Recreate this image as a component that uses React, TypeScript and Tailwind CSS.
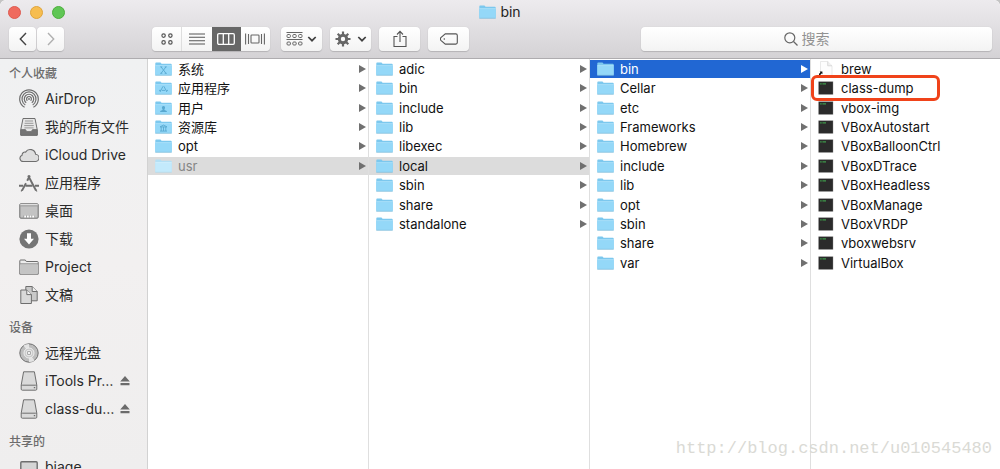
import { useState } from 'react';
import type { ReactNode } from 'react';
import clsx from 'clsx';

type Entry = {
  name: string;
  kind?: 'folder' | 'exec' | 'alias';
  glyph?: 'system' | 'apps' | 'users' | 'library';
  dimmed?: boolean;
  marked?: boolean;
};

type Column = {
  path: string;
  entries: Entry[];
  selected?: string;
  active?: boolean;
};

const folders = (...names: string[]): Entry[] => names.map((name) => ({ name, kind: 'folder' }));
const execs = (...names: string[]): Entry[] => names.map((name) => ({ name, kind: 'exec' }));

const columns: Column[] = [
  {
    path: '/',
    selected: 'usr',
    entries: [
      { name: '系统', glyph: 'system' },
      { name: '应用程序', glyph: 'apps' },
      { name: '用户', glyph: 'users' },
      { name: '资源库', glyph: 'library' },
      { name: 'opt' },
      { name: 'usr', dimmed: true },
    ],
  },
  {
    path: '/usr',
    selected: 'local',
    entries: folders('adic', 'bin', 'include', 'lib', 'libexec', 'local', 'sbin', 'share', 'standalone'),
  },
  {
    path: '/usr/local',
    selected: 'bin',
    active: true,
    entries: folders('bin', 'Cellar', 'etc', 'Frameworks', 'Homebrew', 'include', 'lib', 'opt', 'sbin', 'share', 'var'),
  },
  {
    path: '/usr/local/bin',
    entries: [
      { name: 'brew', kind: 'alias' },
      { name: 'class-dump', kind: 'exec', marked: true },
      ...execs(
        'vbox-img',
        'VBoxAutostart',
        'VBoxBalloonCtrl',
        'VBoxDTrace',
        'VBoxHeadless',
        'VBoxManage',
        'VBoxVRDP',
        'vboxwebsrv',
        'VirtualBox'
      ),
    ],
  },
];

const places = [
  {
    title: '个人收藏',
    items: [
      { label: 'AirDrop', icon: <AirDropIcon /> },
      { label: '我的所有文件', icon: <AllFilesIcon /> },
      { label: 'iCloud Drive', icon: <CloudIcon /> },
      { label: '应用程序', icon: <AppsIcon /> },
      { label: '桌面', icon: <DesktopIcon /> },
      { label: '下载', icon: <DownloadIcon /> },
      { label: 'Project', icon: <PlainFolderIcon /> },
      { label: '文稿', icon: <DocumentsIcon /> },
    ],
  },
  {
    title: '设备',
    items: [
      { label: '远程光盘', icon: <DiscIcon /> },
      { label: 'iTools Pr…', icon: <DriveIcon />, ejectable: true },
      { label: 'class-du…', icon: <DriveIcon />, ejectable: true },
    ],
  },
  {
    title: '共享的',
    items: [{ label: 'biage', icon: <MonitorIcon /> }],
  },
];

function SideSvg({ children }: { children: ReactNode }) {
  return (
    <svg viewBox="0 0 20 20" className="size-5 shrink-0" fill="none" stroke="#6e6e6e" strokeWidth="1" aria-hidden="true">
      {children}
    </svg>
  );
}

function AirDropIcon() {
  return (
    <SideSvg>
      <g strokeWidth="1.2">
        <path d="M5.6 18.3a9.3 9.3 0 1 1 8.8 0" />
        <path d="M6.3 15.9a7 7 0 1 1 7.4 0" />
        <path d="M7.2 13.7a4.7 4.7 0 1 1 5.6 0" />
        <path d="M8.4 11.7a2.4 2.4 0 1 1 3.2 0" />
      </g>
      <circle cx="10" cy="10" r="0.9" fill="#6e6e6e" stroke="none" />
    </SideSvg>
  );
}

function AllFilesIcon() {
  return (
    <SideSvg>
      <path d="M4 1.5h12l2.2 11v5.7H1.8v-5.7z" fill="#e6e6e6" />
      <path d="M1.8 12.7h4.7l1.2 2h4.6l1.2-2h4.7v5.5H1.8z" fill="#747474" />
      <path d="M6 4h8M5.6 6.3h8.8M5.2 8.6h9.6M5.4 10.9h9.2" stroke="#999" />
    </SideSvg>
  );
}

function CloudIcon() {
  return (
    <SideSvg>
      <path
        d="M4.3 16.5h11.8a3.6 3.6 0 0 0 .5-7.2 5.4 5.4 0 0 0-10-2.2 2.9 2.9 0 0 0-3.5 3.100 3.250 3.250 0 0 0 1.200 6.300z"
        fill="#dedede"
        strokeWidth="1.1"
      />
    </SideSvg>
  );
}

function AppsIcon() {
  return (
    <SideSvg>
      <g strokeWidth="1.9">
        <path d="M9.1 2.5 17 17.5" />
        <path d="M10.9 2.5 8.2 7.8M7 10.2 3 17.6" />
        <path d="M0 12.7h4.2M6.5 12.7h7M16 12.7h4" strokeWidth="2" />
      </g>
      <path d="M16.3 16.2 18 18.5M3.6 16.3 2 18.4" strokeWidth="1.1" />
    </SideSvg>
  );
}

function DesktopIcon() {
  return (
    <SideSvg>
      <rect x="0.8" y="2.8" width="18.4" height="14.4" rx="1" fill="#c3c3c3" />
      <path d="M1.3 4.8h17.4" stroke="#8d8d8d" />
      <path d="M1.3 3.7h17.4" stroke="#ededed" />
      <path d="M4.5 16.5v-2h11v2z" fill="#8d8d8d" stroke="none" />
      <path d="M5.2 15.5h2M8 15.5h1.8M10.6 15.5h1.8M13.2 15.5h2" stroke="#fff" strokeWidth="1.8" />
    </SideSvg>
  );
}

function DownloadIcon() {
  return (
    <SideSvg>
      <circle cx="10" cy="10" r="9.6" fill="#757575" stroke="none" />
      <path d="M8 4.2h4v5.6h3L10 15.4 5 9.8h3z" fill="#fff" stroke="none" />
    </SideSvg>
  );
}

function PlainFolderIcon() {
  return (
    <SideSvg>
      <path d="M.8 17.2V3.9c0-.6.3-.9.9-.9h4.6l1 1.5h11.1c.5 0 .8.3.8.8v11.9z" fill="#ececec" />
      <path d="M1.3 7.3h17.4v9.4H1.3z" fill="#c4c4c4" stroke="none" />
      <path d="M1 6.8h18" stroke="#8d8d8d" />
    </SideSvg>
  );
}

function DocumentsIcon() {
  return (
    <SideSvg>
      <path d="M6.8 1.5h6.4l5 5v9.3H6.8z" fill="#c9c9c9" />
      <path d="M13.2 1.5v5h5" fill="#eee" />
      <path d="M1.8 5h6l4.6 4.6v8.9H1.8z" fill="#d9d9d9" />
      <path d="M7.8 5v4.6h4.6" fill="#f2f2f2" />
    </SideSvg>
  );
}

function DiscIcon() {
  return (
    <SideSvg>
      <circle cx="10" cy="10" r="9.2" fill="#bdbdbd" />
      <path d="M10 10 4.5 2.6A9 9 0 0 1 10 1zM10 10l5.5 7.4A9 9 0 0 1 10 19z" fill="#e4e4e4" stroke="none" />
      <circle cx="10" cy="10" r="5" fill="#c9c9c9" stroke="#efefef" />
      <circle cx="10" cy="10" r="2.8" fill="#aaa" stroke="#efefef" />
      <circle cx="10" cy="10" r="1.1" fill="#fff" stroke="none" />
    </SideSvg>
  );
}

function DriveIcon() {
  return (
    <SideSvg>
      <path d="M4.6.8h10.8l2.4 13.4v3.9c0 .7-.4 1.1-1.1 1.1H3.3c-.7 0-1.1-.4-1.1-1.1v-3.9z" fill="#dadada" />
      <path d="M2.2 14.8c.3-.5.6-.6 1.2-.6h13.2c.6 0 .9.1 1.2.6" />
      <path d="M14.8 16.7h1.4" stroke="#555" />
    </SideSvg>
  );
}

function MonitorIcon() {
  return (
    <SideSvg>
      <rect x="1.8" y="4.8" width="16.4" height="11.4" rx="1" fill="#d5d5d5" strokeWidth="1.4" />
      <path d="M6 18.5h8" />
    </SideSvg>
  );
}

function FolderIcon({ glyph, dimmed }: { glyph?: Entry['glyph']; dimmed?: boolean }) {
  return (
    <svg viewBox="0 0 17 14" className="h-3.5 w-[17px] shrink-0" fill="none" aria-hidden="true">
      <path d="M.3 12.7V1.4C.3.8.6.5 1.1.5h4.4l1.1 1.3h9.3c.5 0 .8.3.8.8v10.1z" fill={dimmed ? '#b4e0f5' : '#7cc8ee'} />
      <path d="M.3 3.6h16.4v9.6H.3z" fill={dimmed ? '#c3eafc' : '#94d8f8'} />
      <path d="M.3 3.6h16.4" stroke={dimmed ? '#d8f2fd' : '#b4e4fb'} strokeWidth=".7" />
      <path d="M.3 13.3h16.4" stroke={dimmed ? '#b5d8e8' : '#7bb9d8'} strokeWidth=".7" />
      <g stroke="#58a8d0" strokeWidth=".9">
        {glyph === 'system' && <path d="m6 4.8 5 6.6M11 4.8 6 11.4M5.3 4.9h2M9.7 4.9h2M5.3 11.3h2M9.7 11.3h2" />}
        {glyph === 'apps' && <path d="m8.9 5.3 3 5.7M8 5.3l-3 5.7M4 9.4h2M7 9.4h3M11.5 9.4H13" />}
        {glyph === 'users' && (
          <path d="M8.5 5a1.7 1.7 0 0 1 1 3v.9l2.3 1v1.2H5.2V9.9l2.3-1V8a1.7 1.7 0 0 1 1-3z" fill="#58a8d0" stroke="none" />
        )}
        {glyph === 'library' && <path d="m5 6.9 3.5-1.8L12 6.9zM5 11.1h7M6.2 7v4M8.5 7v4M10.8 7v4" />}
      </g>
    </svg>
  );
}

function ExecIcon() {
  return (
    <svg viewBox="0 0 17 14" className="h-3.5 w-[17px] shrink-0" aria-hidden="true">
      <rect x=".4" y=".4" width="14.8" height="13.2" fill="#8a8a8a" />
      <rect x=".8" y=".9" width="14" height="12.3" fill="#2b2b2b" />
      <path d="M2.1 2.9h1.6M4.4 2.9H8" stroke="#3f9a4b" strokeWidth="1.1" />
    </svg>
  );
}

function AliasIcon() {
  return (
    <svg viewBox="0 0 17 18" className="h-[18px] w-[17px] shrink-0" fill="none" aria-hidden="true">
      <path d="M2.5 1.5h7.2l4.3 4.3v11.2H2.5z" fill="#fdfdfd" stroke="#e0e0e0" strokeWidth=".7" />
      <path d="M9.7 1.5v4.3H14" fill="#f1f1f1" stroke="#cfcfcf" strokeWidth=".7" />
      <path d="M.9 15.3c0-1.500.5-2.400 1.500-2.900l-.7-.8h2.700v2.600l-.8-.7c-.8.4-1.100 1-1.200 1.900z" fill="#111" />
    </svg>
  );
}

function EntryIcon({ entry }: { entry: Entry }) {
  if (entry.kind === 'exec') return <ExecIcon />;
  if (entry.kind === 'alias') return <AliasIcon />;
  return <FolderIcon glyph={entry.glyph} dimmed={entry.dimmed} />;
}

function Chevron() {
  return (
    <svg viewBox="0 0 10 6" className="h-1.5 w-2.5" fill="none" stroke="#404040" strokeWidth="1.7" aria-hidden="true">
      <path d="M1.3 1 5 4.7 8.7 1" />
    </svg>
  );
}

const buttonClass =
  'flex h-6 items-center justify-center rounded bg-linear-to-b from-white to-[#f3f3f3] shadow-[0_1px_1px_#b5b3b6,0_0_1px_#c0bec1]';

function Toolbar() {
  const [query, setQuery] = useState('');

  return (
    <header className="shrink-0 rounded-t-md border-b border-[#aeacaf] bg-linear-to-b from-[#edebee] to-[#d4d2d5]">
      <div className="relative flex h-6 items-center justify-center">
        <div className="absolute left-2 flex gap-[9px]">
          <button aria-label="关闭" className="size-[13px] rounded-full border border-[#dd5a50] bg-[#ef6a5e]" />
          <button aria-label="最小化" className="size-[13px] rounded-full border border-[#dfa43b] bg-[#f6bd50]" />
          <button aria-label="缩放" className="size-[13px] rounded-full border border-[#4caf3c] bg-[#60c655]" />
        </div>
        <h1 className="flex items-center gap-1 text-sm">
          <FolderIcon />
          bin
        </h1>
      </div>

      <div className="flex items-center pt-[3px] pr-2 pb-[7px] pl-[9px]">
        <div className="flex gap-[1px]">
          <button aria-label="后退" className={clsx(buttonClass, 'w-[27px]')}>
            <svg viewBox="0 0 8 14" className="h-3.5 w-2" fill="none" stroke="#444" strokeWidth="1.4">
              <path d="M7 1 1.3 7 7 13" />
            </svg>
          </button>
          <button aria-label="前进" className={clsx(buttonClass, 'w-[27px]')}>
            <svg viewBox="0 0 8 14" className="h-3.5 w-2" fill="none" stroke="#b0b0b0" strokeWidth="1.4">
              <path d="m1 1 5.7 6L1 13" />
            </svg>
          </button>
        </div>

        <div className={clsx(buttonClass, 'ml-[88px] w-[118px] overflow-hidden')}>
          <button aria-label="图标" className="flex h-full flex-1 items-center justify-center border-r border-[#dedede]">
            <svg viewBox="0 0 12 12" className="size-3" fill="none" stroke="#555" strokeWidth="1.2">
              <circle cx="2.6" cy="2.6" r="1.7" />
              <circle cx="9.4" cy="2.6" r="1.7" />
              <circle cx="2.6" cy="9.4" r="1.7" />
              <circle cx="9.4" cy="9.4" r="1.7" />
            </svg>
          </button>
          <button aria-label="列表" className="flex h-full flex-1 items-center justify-center">
            <svg viewBox="0 0 16 12" className="h-3 w-4" stroke="#555" strokeWidth="1.1">
              <path d="M0 1h16M0 4.3h16M0 7.7h16M0 11h16" />
            </svg>
          </button>
          <button aria-label="分栏" aria-pressed="true" className="flex h-full flex-1 items-center justify-center bg-[#676767]">
            <svg viewBox="0 0 18 12" className="h-3 w-[18px]" fill="none" stroke="#fff" strokeWidth="1.3">
              <rect x=".7" y=".7" width="16.6" height="10.6" rx="1.2" />
              <path d="M6.3 1v10M11.7 1v10" />
            </svg>
          </button>
          <button aria-label="Cover Flow" className="flex h-full flex-1 items-center justify-center">
            <svg viewBox="0 0 20 12" className="h-3 w-5" fill="none" stroke="#666" strokeWidth="1.1">
              <rect x="6" y="2" width="8" height="8" rx=".8" />
              <path d="M.6.5v11M3.5 1v10M16.5 1v10M19.4.5v11" />
            </svg>
          </button>
        </div>

        <div className="ml-[11px] flex gap-2">
          <button aria-label="排列" className={clsx(buttonClass, 'w-[41px] gap-1')}>
            <svg viewBox="0 0 17 16" className="h-4 w-[17px]" fill="none" stroke="#666" strokeWidth="1">
              <path d="M.5 1.5h16M.5 8.5h16" />
              <rect x="1" y="3.5" width="3.4" height="3" rx="1" />
              <rect x="6.8" y="3.5" width="3.4" height="3" rx="1" />
              <rect x="12.6" y="3.5" width="3.4" height="3" rx="1" />
              <rect x="1" y="11" width="3.4" height="3" rx="1" />
              <rect x="6.8" y="11" width="3.4" height="3" rx="1" />
              <rect x="12.6" y="11" width="3.4" height="3" rx="1" />
            </svg>
            <Chevron />
          </button>
          <button aria-label="操作" className={clsx(buttonClass, 'w-[41px] gap-1.5')}>
            <svg viewBox="0 0 16 16" className="size-4" fill="none" stroke="#666">
              <circle cx="8" cy="8" r="3.7" strokeWidth="3" />
              <path
                d="M8 .5V4M8 12v3.5M.5 8H4M12 8h3.5M2.7 2.7l2.5 2.5M10.8 10.8l2.5 2.5M2.7 13.3l2.5-2.5M10.8 5.2l2.5-2.5"
                strokeWidth="2.2"
              />
            </svg>
            <Chevron />
          </button>
          <button aria-label="共享" className={clsx(buttonClass, 'w-[41px]')}>
            <svg viewBox="0 0 14 18" className="h-[18px] w-3.5" fill="none" stroke="#555" strokeWidth="1.1">
              <path d="M4.5 6.5H1v10h12v-10H9.5M7 12V1.5M4 4.5l3-3.2 3 3.2" />
            </svg>
          </button>
          <button aria-label="标记" className={clsx(buttonClass, 'w-[41px]')}>
            <svg viewBox="0 0 18 12" className="h-3 w-[18px]" fill="none" stroke="#555" strokeWidth="1.1">
              <path d="M5.3.9h10.5c.9 0 1.5.6 1.5 1.5v7.2c0 .9-.6 1.5-1.5 1.5H5.3L.9 7.3C.3 6.6.3 5.4.9 4.7z" />
              <circle cx="4.3" cy="6" r=".8" fill="#555" stroke="none" />
            </svg>
          </button>
        </div>

        <label className={clsx(buttonClass, 'ml-auto w-[351px] gap-1 pr-4')}>
          <svg viewBox="0 0 14 14" className="size-3.5" fill="none" stroke="#666" strokeWidth="1.2">
            <circle cx="5.8" cy="5.8" r="5" />
            <path d="m9.5 9.5 4 4" />
          </svg>
          <input
            aria-label="搜索"
            placeholder="搜索"
            value={query}
            onChange={(e) => setQuery(e.target.value)}
            className="w-8 text-sm outline-none placeholder:text-[#929292]"
          />
        </label>
      </div>
    </header>
  );
}

function Sidebar() {
  return (
    <aside className="flex flex-col gap-2 overflow-hidden border-r border-[#d2d2d2] bg-linear-to-b from-[#f0f1f2] via-[#f2f0f0] to-[#efeeee] pt-1">
      {places.map((group) => (
        <section key={group.title}>
          <h2 className="flex h-[22px] items-center pl-[9px] text-xs font-medium text-[#6c6c6c]">{group.title}</h2>
          <ul>
            {group.items.map((item) => (
              <li key={item.label} className="flex h-7 items-center pr-[17px] pl-[19px]">
                <a href="#" className="flex min-w-0 flex-1 items-center gap-1.5 text-sm whitespace-nowrap text-[#2a2a2a]">
                  {item.icon}
                  {item.label}
                </a>
                {'ejectable' in item && (
                  <button aria-label="推出">
                    <svg viewBox="0 0 10 10" className="size-2.5" fill="#6b6b6b">
                      <path d="M5 0 9.8 5.5H.2zM.5 7h9v2.2h-9z" />
                    </svg>
                  </button>
                )}
              </li>
            ))}
          </ul>
        </section>
      ))}
    </aside>
  );
}

function BrowserColumn({ column }: { column: Column }) {
  return (
    <section className="min-w-0 border-r border-[#dfdfdf] pt-[1px] last:border-r-0" aria-label={column.path}>
      <div className="grid h-[213px] grid-rows-11">
        {column.entries.map((entry) => {
          const selected = column.selected === entry.name;
          const highlighted = selected && column.active;
          const hasChildren = !entry.kind || entry.kind === 'folder';

          return (
            <button
              key={entry.name}
              className={clsx(
                'relative flex h-[18px] items-center gap-1.5 pr-0.5 pl-[7px] text-left text-[13px] leading-[18px] whitespace-nowrap',
                selected && (highlighted ? 'bg-[#2167d3]' : 'bg-[#dcdcdc]'),
                highlighted ? 'text-white' : entry.dimmed ? 'text-[#858585]' : 'text-[#111]'
              )}
            >
              <EntryIcon entry={entry} />
              <span className="flex-1">{entry.name}</span>
              {hasChildren && (
                <svg viewBox="0 0 7 8" className="h-2 w-[7px]" fill={highlighted ? '#fff' : '#707070'}>
                  <path d="M0 0 7 4 0 8z" />
                </svg>
              )}
              {entry.marked && (
                <span className="absolute -inset-y-1 left-0 w-[129px] rounded-md border-[3px] border-[#f0431a]" />
              )}
            </button>
          );
        })}
      </div>
    </section>
  );
}

export default function App() {
  return (
    <div className="h-screen bg-[#c4c4c4] font-['Inter','Noto_Sans_CJK_SC',sans-serif] text-[#222]">
      <div className="relative flex h-full flex-col overflow-hidden rounded-t-md bg-white">
        <Toolbar />
        <div className="grid min-h-0 flex-1 grid-cols-[148px_1fr]">
          <Sidebar />
          <main className="grid grid-cols-[221fr_221fr_221fr_189fr]">
            {columns.map((column) => (
              <BrowserColumn key={column.path} column={column} />
            ))}
          </main>
        </div>
        <p className="absolute right-2 bottom-2 font-['Liberation_Mono',monospace] text-[17px] text-[#dadad5]">
          http://blog.csdn.net/u010545480
        </p>
      </div>
    </div>
  );
}
